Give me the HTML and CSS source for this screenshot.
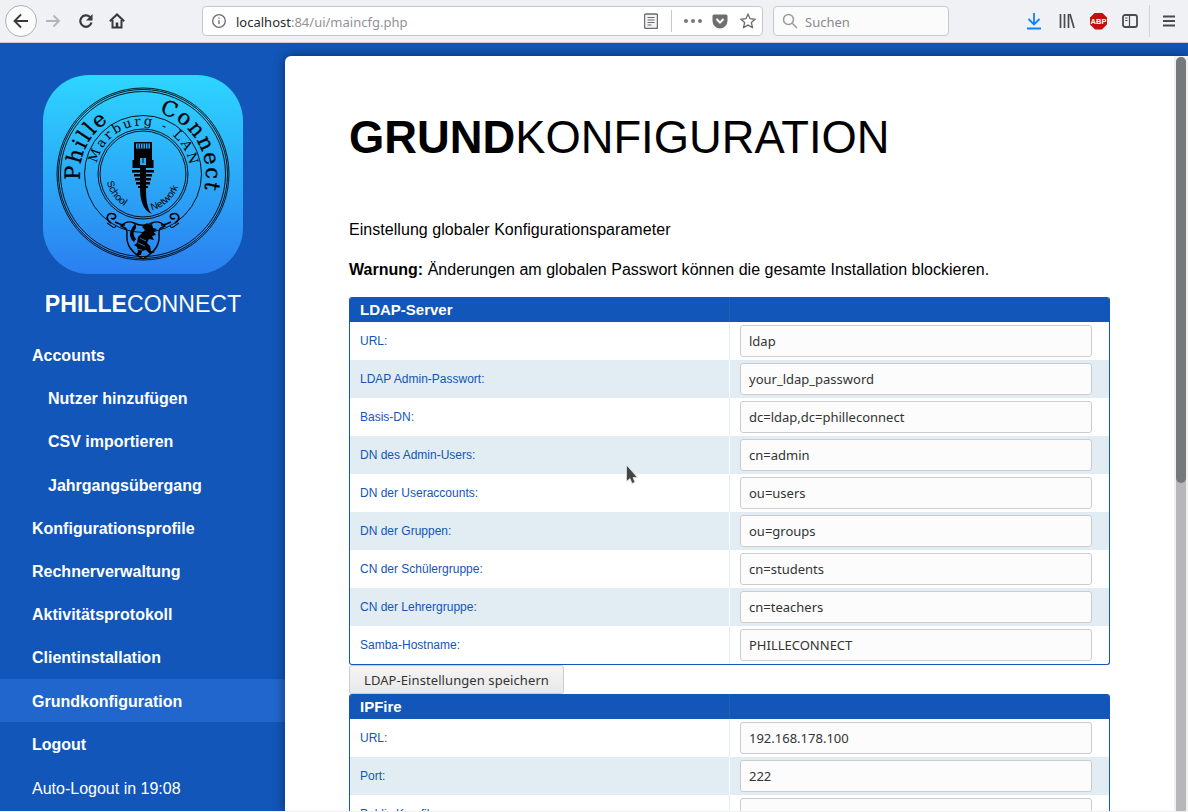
FILE: index.html
```html
<!DOCTYPE html>
<html lang="de">
<head>
<meta charset="utf-8">
<title>Grundkonfiguration</title>
<link rel="stylesheet" href="styles.css">
</head>
<body>
<header class="toolbar">
  <button class="back" aria-label="Zurück">
    <svg width="20" height="20" viewBox="0 0 20 20" class="ic"><path d="M17 10H4M10 3.500 3.500 10l6.500 6.500"/></svg>
  </button>
  <svg width="16" height="16" viewBox="0 0 16 16" class="ic fwd"><path d="M1 8h13M8.500 2.500 14 8l-5.500 5.500"/></svg>
  <svg width="16" height="16" viewBox="0 0 16 16" class="ic reload"><path d="M13.500 9.500A5.700 5.700 0 1 1 12 4"/><path class="fill" d="M14.500 1v6.500H8z"/></svg>
  <svg width="16" height="16" viewBox="0 0 16 16" class="ic home"><path d="M.8 8.300 8 1.500l7.200 6.800"/><path d="M3.500 7v7.500h9V7"/><path class="fill" d="M6.700 9.500h2.600v5H6.700z"/></svg>
  <div class="urlbar">
    <svg width="16" height="16" viewBox="0 0 16 16" class="ic2 info"><circle cx="8" cy="8" r="6.300"/><path d="M8 7.200v4M8 4.400v1.300"/></svg>
    <span class="url"><span class="host">localhost</span>:84/ui/maincfg.php</span>
    <svg width="14" height="16" viewBox="0 0 14 16" class="reader"><rect x=".5" y="1" width="13" height="14.500" rx="1.500"/><path d="M3.500 4.500h7M3.500 7h7M3.500 9.500h7M3.500 12h4"/></svg>
    <span class="sep"></span>
    <span class="dots"><i></i><i></i><i></i></span>
    <svg width="16" height="16" viewBox="0 0 16 16" class="pocket"><path class="shape" d="M2 1.500h12a1.500 1.500 0 0 1 1.500 1.500v5a7.500 7.500 0 0 1-15 0V3A1.500 1.500 0 0 1 2 1.500z"/><path class="chev" d="M4.500 6 8 9.500 11.500 6"/></svg>
    <svg width="16" height="16" viewBox="0 0 16 16" class="ic2 star"><path d="M8 1.200l2.100 4.500 4.900.6-3.600 3.300 1 4.900L8 12.100l-4.400 2.400 1-4.900L1 6.300l4.900-.6z"/></svg>
  </div>
  <div class="search">
    <svg width="16" height="16" viewBox="0 0 16 16" class="ic2 glass"><circle cx="6.500" cy="6.500" r="5"/><path d="M10.200 10.200 15 15"/></svg>
    <span>Suchen</span>
  </div>
  <div class="tools">
    <svg width="16" height="18" viewBox="0 0 16 18" class="dl"><path d="M8 1v11M2.500 7 8 12.500 13.500 7M1 16.500h14"/></svg>
    <svg width="16" height="16" viewBox="0 0 16 16" class="lib"><path d="M1.500 1v14M5.500 1v14M9.500 1v14M11 1l4 14"/></svg>
    <span class="abp">ABP</span>
    <svg width="16" height="14" viewBox="0 0 16 14" class="side"><rect x="1" y="1" width="14" height="12" rx="2"/><path d="M7.500 1v12M3.200 4h2.300M3.200 6.500h2.300"/></svg>
    <span class="tsep"></span>
    <svg width="12" height="12" viewBox="0 0 12 12" class="menu"><path d="M0 1.500h12M0 6h12M0 10.500h12"/></svg>
  </div>
</header>

<div class="app">
  <aside class="sidebar">
    <div class="logo">
      <svg viewBox="0 0 200 200" width="200" height="200">
        <defs>
          <linearGradient id="lg" x1="0" y1="0" x2="0" y2="1">
            <stop offset="0" stop-color="#2dd6ff"/>
            <stop offset="1" stop-color="#2a7ff0"/>
          </linearGradient>
          <path id="arcOuter" d="M38 110A63 63 0 1 1 160.900 115.300"/>
          <path id="arcMid" d="M53 97.400A47 47 0 0 1 147 97.400"/>
          <path id="arcSchool" d="M63 100A37.500 37.500 0 0 0 95 136"/>
          <path id="arcNet" d="M104 136.300A37.500 37.500 0 0 0 137.500 100"/>
        </defs>
        <rect width="200" height="199" rx="46" fill="url(#lg)"/>
        <g fill="none" stroke="#000" stroke-width=".9">
          <circle cx="100" cy="99" r="86"/><circle cx="100" cy="99" r="84.500"/><circle cx="100" cy="99" r="82.500"/>
          <circle cx="100" cy="99" r="58.500"/>
          <circle cx="100" cy="99" r="45"/><circle cx="100" cy="99" r="43"/>
        </g>
        <text class="lg1"><textPath href="#arcOuter" startOffset="5">Phille</textPath></text>
        <text class="lg1"><textPath href="#arcOuter" startOffset="126">Connect</textPath></text>
        <text class="lg2"><textPath href="#arcMid" startOffset="9">Marburg - LAN</textPath></text>
        <text class="lg3"><textPath href="#arcSchool" startOffset="7">School</textPath></text>
        <text class="lg3"><textPath href="#arcNet" startOffset="5">Network</textPath></text>
        <path d="M91 67h18v18h1.500v8h-21v-8h1.500z"/>
        <path d="M93 68.500h14v5H93zM97 83h6v7h-6z" fill="#2aa8f8"/>
        <path d="M95 68.500v5M97.500 68.500v5M100 68.500v5M102.500 68.500v5M105 68.500v5M100 83v5" stroke="#000" stroke-width=".9"/>
        <path d="M89 95h22v2.500H89zM91 99h18v2.500H91zM92 103h16v2.500H92zM93 107h14v2.500H93zM95 111h10v2H95zM97 93h6v20h-6z"/>
        <path d="M97 113c0 10 2 22 12 26-5-5-6-15-6-26z"/>
        <g fill="none" stroke="#000" stroke-width="1.700">
          <path d="M68 148c-7-5-3-11 3-9 4 2 0 7-3 4M72 147c4 2 7 3 10 3"/>
          <path d="M132 148c7-5 3-11-3-9-4 2 0 7 3 4M128 147c-4 2-7 3-10 3"/>
          <path d="M64 148c4 2 7 7 9 3M136 148c-4 2-7 7-9 3" stroke-width="1.100"/>
        </g>
        <path d="M78 151c4-4 9-5 13-3 6 3 12 3 18 0 4-2 9-1 13 3l-4 2c-2 1-2 3-2 6 1 11-4 18-16 25-12-7-17-14-16-25 0-3 0-5-2-6z" fill="none" stroke="#000" stroke-width="1.400"/>
        <path d="M104 148l2 2 3-1 1 4 4 1-3 3 2 3-4 1 2 4-5-1-2 4 3 3 1 5 4 1-5 2-4-4-4 1-1 4h-6l3-3-1-5-3-2 3-2 1-6 4-4 3-3-3-3z"/>
        <path d="M91 167c-4-3-5-8-3-12 1-3 3-4 4-7 2 3 1 6-1 8-1 3 0 6 2 8z"/>
        <path d="M97 163l6 3M95 168l7 3M93 174l6 1" stroke="#2a90f4" stroke-width=".8" fill="none"/>
      </svg>
    </div>
    <div class="brand"><strong>PHILLE</strong>CONNECT</div>
    <nav class="nav">
      <a class="item">Accounts</a>
      <a class="item sub">Nutzer hinzufügen</a>
      <a class="item sub">CSV importieren</a>
      <a class="item sub">Jahrgangsübergang</a>
      <a class="item">Konfigurationsprofile</a>
      <a class="item">Rechnerverwaltung</a>
      <a class="item">Aktivitätsprotokoll</a>
      <a class="item">Clientinstallation</a>
      <a class="item active">Grundkonfiguration</a>
      <a class="item">Logout</a>
      <span class="item timer">Auto-Logout in 19:08</span>
    </nav>
  </aside>

  <div class="stage">
    <div class="sheet">
      <main class="content">
        <h1><strong>GRUND</strong>KONFIGURATION</h1>
        <p class="intro">Einstellung globaler Konfigurationsparameter</p>
        <p class="warn"><strong>Warnung:</strong> Änderungen am globalen Passwort können die gesamte Installation blockieren.</p>

        <section class="panel">
          <div class="row head"><div class="lab">LDAP-Server</div><div class="val"></div></div>
          <div class="row"><div class="lab">URL:</div><div class="val"><input value="ldap"></div></div>
          <div class="row"><div class="lab">LDAP Admin-Passwort:</div><div class="val"><input value="your_ldap_password"></div></div>
          <div class="row"><div class="lab">Basis-DN:</div><div class="val"><input value="dc=ldap,dc=philleconnect"></div></div>
          <div class="row"><div class="lab">DN des Admin-Users:</div><div class="val"><input value="cn=admin"></div></div>
          <div class="row"><div class="lab">DN der Useraccounts:</div><div class="val"><input value="ou=users"></div></div>
          <div class="row"><div class="lab">DN der Gruppen:</div><div class="val"><input value="ou=groups"></div></div>
          <div class="row"><div class="lab">CN der Schülergruppe:</div><div class="val"><input value="cn=students"></div></div>
          <div class="row"><div class="lab">CN der Lehrergruppe:</div><div class="val"><input value="cn=teachers"></div></div>
          <div class="row"><div class="lab">Samba-Hostname:</div><div class="val"><input value="PHILLECONNECT"></div></div>
        </section>
        <button class="save">LDAP-Einstellungen speichern</button>
        <section class="panel">
          <div class="row head"><div class="lab">IPFire</div><div class="val"></div></div>
          <div class="row"><div class="lab">URL:</div><div class="val"><input value="192.168.178.100"></div></div>
          <div class="row"><div class="lab">Port:</div><div class="val"><input value="222"></div></div>
          <div class="row"><div class="lab">Public Key-file:</div><div class="val"><input value=""></div></div>
        </section>
      </main>
      <div class="scrollbar"><div class="rail"><span class="thumb"></span></div></div>
    </div>
  </div>
</div>

<svg class="cursor" width="14" height="22" viewBox="0 0 14 22"><path d="M1.500 1v16.500l3.500-3 2 5 3-1.300-2-4.700h4.500z" fill="#444" stroke="#eee" stroke-width=".7"/></svg>
<div class="bottomline"></div>
</body>
</html>
```

FILE: styles.css
```css
* { box-sizing: border-box; }
html, body { margin: 0; height: 812px; overflow: hidden; }
body { background: #1156b8; font-family: "Liberation Sans", Arial, sans-serif; position: relative; }

/* Browser chrome */
.toolbar { height: 43px; background: #f0f1f4; border-bottom: 1px solid #ccc; display: flex; align-items: center; padding-left: 5px; font-family: "Noto Sans", sans-serif; }
.ic path, .ic2 path, .ic2 circle { fill: none; stroke-width: 1.800; }
.ic path { stroke: #38383d; }
.ic path.fill { fill: #38383d; stroke: none; }
.ic2 path, .ic2 circle { stroke: #6a6a6f; stroke-width: 1.300; }
.back { width: 32px; height: 32px; border: 1px solid #b1b1b3; border-radius: 50%; background: #fbfbfb; padding: 0; display: flex; align-items: center; justify-content: center; }
.fwd { margin-left: 8px; }
.fwd path { stroke: #b4b4b6; }
.reload { margin-left: 17px; }
.reload path { stroke-width: 2.200; }
.home { margin-left: 15px; }
.home path { stroke-width: 2; }
.urlbar { margin-left: 77px; width: 561px; height: 30px; background: #fff; border: 1px solid #c8c8ca; border-radius: 4px; display: flex; align-items: center; padding: 0 6px 0 8px; }
.info { flex: none; }
.url { margin-left: 9px; padding-top: 1px; font-size: 13px; color: #929296; flex: 1; white-space: nowrap; }
.host { color: #2a2a2e; }
.reader rect { fill: #f4f4f4; stroke: #6a6a6f; stroke-width: 1.400; }
.reader path { stroke: #6a6a6f; stroke-width: 1; fill: none; }
.sep { width: 1px; height: 22px; background: #c9c9cb; margin-left: 13px; }
.dots { display: flex; gap: 3px; margin-left: 12px; }
.dots i { width: 4px; height: 4px; border-radius: 50%; background: #77777b; }
.pocket { margin-left: 10px; }
.pocket .shape { fill: #6f6f73; }
.pocket .chev { fill: none; stroke: #fff; stroke-width: 2; }
.star { margin-left: 12px; }
.search { margin-left: 10px; width: 176px; height: 30px; background: #fbfbfb; border: 1px solid #c8c8ca; border-radius: 4px; display: flex; align-items: center; padding-left: 8px; font-size: 13px; color: #8a8a8e; gap: 7px; }
.search span { padding-top: 1px; }
.glass path, .glass circle { stroke: #9a9a9e; stroke-width: 1.500; }
.tools { display: flex; align-items: center; margin-left: 77px; }
.dl path { fill: none; stroke: #0a84ff; stroke-width: 1.800; }
.lib { margin-left: 17px; }
.lib path { stroke: #4a4a4f; stroke-width: 1.700; fill: none; }
.abp { margin-left: 15px; width: 17px; height: 17px; background: #c70d0d; color: #fff; font: bold 7.500px/17px "Liberation Sans", sans-serif; text-align: center; clip-path: polygon(30% 0, 70% 0, 100% 30%, 100% 70%, 70% 100%, 30% 100%, 0 70%, 0 30%); }
.side { margin-left: 15px; }
.side rect { fill: none; stroke: #4a4a4f; stroke-width: 1.800; }
.side path { fill: none; stroke: #4a4a4f; stroke-width: 1.200; }
.tsep { width: 1px; height: 32px; background: #d5d5d7; margin-left: 11px; }
.menu { margin-left: 13px; }
.menu path { stroke: #4a4a4f; stroke-width: 1.800; fill: none; }

/* App */
.app { display: flex; height: 769px; }
.sidebar { width: 285px; flex: none; background: #1156b8; color: #fff; padding-top: 32px; }
.logo { width: 200px; height: 199px; margin-left: 43px; }
.logo svg { display: block; }
.logo text { font-family: "DejaVu Serif", serif; fill: #000; }
.logo .lg1 { font-size: 21px; letter-spacing: 1.500px; stroke: #000; stroke-width: .3px; }
.logo .lg2 { font-size: 13px; letter-spacing: 2.500px; }
.logo .lg3 { font-family: "Liberation Sans", sans-serif; font-size: 10px; }
.brand { text-align: center; font-size: 23.100px; line-height: 28px; margin-top: 16px; padding-left: 1px; }
.nav { margin-top: 15.700px; }
.item { display: block; height: 43.200px; padding: .4px 0 0 32px; line-height: 43.200px; font-size: 16px; font-weight: bold; white-space: nowrap; }
.item.sub { padding-left: 48px; }
.item.active { background: #2066cc; }
.item.timer { font-weight: normal; margin-top: .6px; }

.stage { flex: 1; display: flex; min-width: 0; padding-top: 13px; }
.sheet { flex: 1; display: flex; min-width: 0; border-radius: 6px 0 0 0; overflow: hidden; box-shadow: 0 0 12px rgba(0,0,0,.45); }
.content { flex: 1; background: #fff; padding: 0 64px 0 64px; min-width: 0; overflow: hidden; }
h1 { margin: 55px 0 0; font-size: 45.330px; line-height: 53px; font-weight: normal; color: #000; }
.intro { margin: 56px 0 0; font-size: 16px; line-height: 20px; color: #000; letter-spacing: .05px; }
.warn { margin: 20px 0 0; font-size: 16px; line-height: 20px; color: #000; letter-spacing: .015px; }
.panel { border: 1px solid #1156b8; border-top: 0; border-radius: 3px; overflow: hidden; background: #fff; }
.warn + .panel { margin-top: 17px; }
.row { display: flex; height: 38px; }
.row:nth-child(odd) { background: #e1edf3; }
.row.head { height: 25px; background: #1156b8; color: #fff; font-weight: bold; font-size: 15px; }
.lab { width: 380px; flex: none; padding: 9px 0 0 10px; font-size: 12px; line-height: 20px; color: #1156b8; border-right: 1px solid #e1edf3; }
.row:nth-child(odd) .lab { border-right-color: #fff; }
.head .lab { padding: 2px 0 0 10px; color: #fff; font-size: 15px; line-height: 21px; }
.row.head .lab { border-right-color: #1d64ad; }
.val { flex: 1; padding: 3px 17px 3px 10px; }
input { display: block; width: 100%; height: 32px; border: 1px solid #ccc; border-radius: 3px; background: #fcfcfc; padding: 0 8px; font: 13px "Noto Sans", sans-serif; color: #333; }
.save { display: block; height: 29px; margin: 0; width: 215px; border: 1px solid #ccc; border-radius: 3px; background: linear-gradient(#f5f5f5, #e8e8ea); font: 13px "Noto Sans", sans-serif; letter-spacing: .08px; color: #333; padding: 0; }
.scrollbar { width: 14px; flex: none; background: #f0f0f0; padding: 1px 2px 0; }
.rail { height: 100%; background: #b7b7ba; border-radius: 5px 5px 0 0; }
.thumb { display: block; height: 426px; background: #77787c; border-radius: 5px; }

.cursor { position: absolute; left: 625px; top: 464px; }
.bottomline { position: absolute; left: 0; right: 0; bottom: 0; height: 1px; background: #f0f0f4; }
```
